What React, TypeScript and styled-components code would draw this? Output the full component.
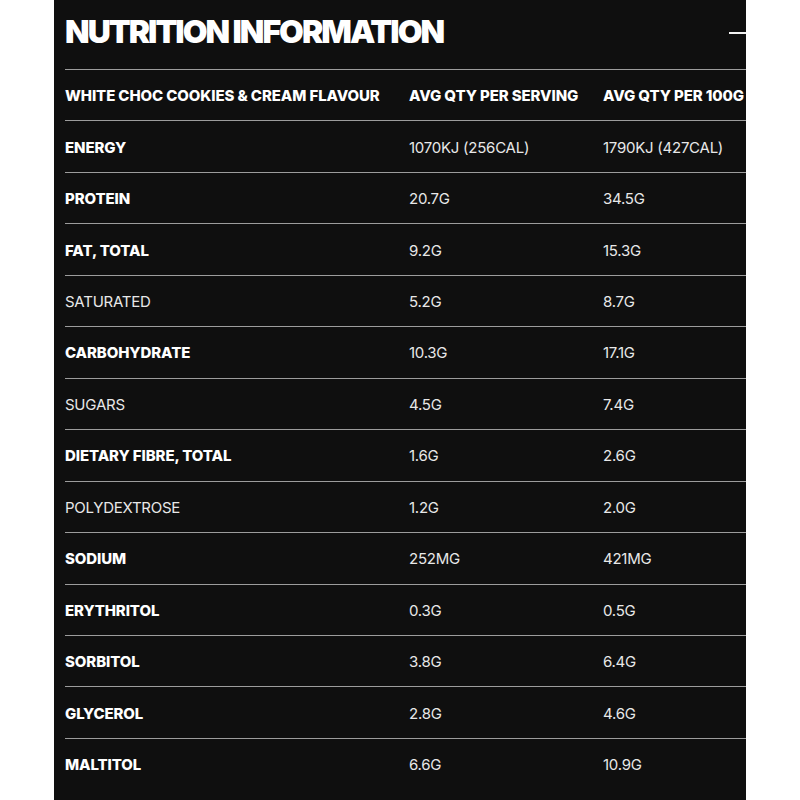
import React from "react";
import styled, { createGlobalStyle } from "styled-components";

const Global = createGlobalStyle`
  html, body { margin: 0; padding: 0; background: #ffffff; }
  body { font-family: Inter, "Noto Sans", sans-serif; }
`;

const Panel = styled.section`
  margin-left: 54px;
  width: 692px;
  height: 800px;
  background: #0f0f0f;
  overflow: hidden;
  padding-left: 11px;
  box-sizing: border-box;
  color: #fff;
`;

const Header = styled.header`
  display: flex;
  align-items: center;
  justify-content: space-between;
  height: 69px;
  padding-bottom: 5px;
  box-sizing: border-box;
`;

const Title = styled.h2`
  margin: 0;
  font-family: Inter, sans-serif;
  font-weight: 900;
  font-size: 32px;
  letter-spacing: -2px;
  line-height: 1;
  color: #fff;
`;

const Toggle = styled.span`
  display: block;
  width: 20px;
  height: 2px;
  background: #f2f2f2;
  margin-right: -3px;
  margin-top: 2px;
`;

const Table = styled.div`
  width: 760px;
  display: flex;
  flex-direction: column;
`;

const Row = styled.div`
  display: grid;
  grid-template-columns: 344px 194px 1fr;
  align-items: center;
  height: 51.46px;
  box-sizing: border-box;
  border-top: 1px solid #9c9c9c;
`;

const Cell = styled.div<{ $bold?: boolean }>`
  font-family: Inter, sans-serif;
  font-size: 15px;
  line-height: 1;
  white-space: nowrap;
  font-weight: ${(p) => (p.$bold ? 800 : 400)};
  letter-spacing: ${(p) => (p.$bold ? "-0.1px" : "-0.25px")};
  color: ${(p) => (p.$bold ? "#ffffff" : "#e8e8e8")};
  padding-top: 1px;
`;

const rows: [string, boolean, string, string][] = [
  ["ENERGY", true, "1070KJ (256CAL)", "1790KJ (427CAL)"],
  ["PROTEIN", true, "20.7G", "34.5G"],
  ["FAT, TOTAL", true, "9.2G", "15.3G"],
  ["SATURATED", false, "5.2G", "8.7G"],
  ["CARBOHYDRATE", true, "10.3G", "17.1G"],
  ["SUGARS", false, "4.5G", "7.4G"],
  ["DIETARY FIBRE, TOTAL", true, "1.6G", "2.6G"],
  ["POLYDEXTROSE", false, "1.2G", "2.0G"],
  ["SODIUM", true, "252MG", "421MG"],
  ["ERYTHRITOL", true, "0.3G", "0.5G"],
  ["SORBITOL", true, "3.8G", "6.4G"],
  ["GLYCEROL", true, "2.8G", "4.6G"],
  ["MALTITOL", true, "6.6G", "10.9G"],
];

export default function App() {
  return (
    <>
      <Global />
      <Panel>
        <Header>
          <Title>NUTRITION INFORMATION</Title>
          <Toggle aria-label="collapse" />
        </Header>
        <Table>
          <Row>
            <Cell $bold>WHITE CHOC COOKIES &amp; CREAM FLAVOUR</Cell>
            <Cell $bold>AVG QTY PER SERVING</Cell>
            <Cell $bold>AVG QTY PER 100G</Cell>
          </Row>
          {rows.map(([label, bold, a, b]) => (
            <Row key={label}>
              <Cell $bold={bold}>{label}</Cell>
              <Cell>{a}</Cell>
              <Cell>{b}</Cell>
            </Row>
          ))}
        </Table>
      </Panel>
    </>
  );
}
